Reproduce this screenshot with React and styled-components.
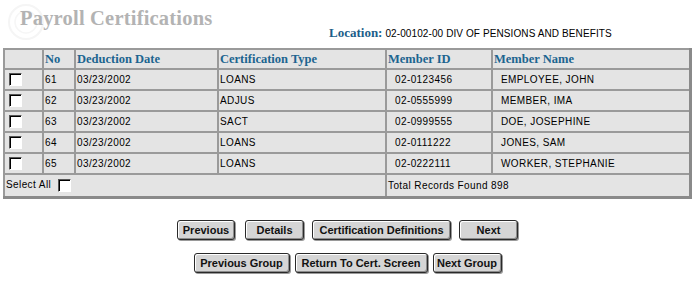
import React from "react";
import styled, { createGlobalStyle } from "styled-components";

const GlobalStyle = createGlobalStyle`
  body {
    margin: 0;
    background: #ffffff;
    font-family: "Liberation Sans", Arial, sans-serif;
  }
`;

const Page = styled.div`
  display: flex;
  flex-direction: column;
  width: 695px;
  height: 281px;
  overflow: hidden;
`;

const Header = styled.div`
  position: relative;
  height: 48px;
  display: flex;
  flex-direction: column;
`;

const Seal = styled.svg`
  position: absolute;
  left: 4px;
  top: 2px;
  z-index: 0;
`;

const Title = styled.h1`
  position: relative;
  z-index: 1;
  margin: 0;
  padding: 7px 0 0 20px;
  font-family: "Liberation Serif", "Times New Roman", serif;
  font-size: 20.5px;
  font-weight: bold;
  color: #b3b3b3;
  line-height: 22px;
  letter-spacing: 0.2px;
`;

const LocationRow = styled.div`
  margin: -4px 0 0 329px;
  display: flex;
  align-items: baseline;
  gap: 3px;
`;

const LocationLabel = styled.span`
  font-family: "Liberation Serif", "Times New Roman", serif;
  font-weight: bold;
  font-size: 13px;
  color: #1c5e8a;
`;

const LocationValue = styled.span`
  font-size: 10px;
  letter-spacing: 0.1px;
  color: #000;
`;

const TableWrap = styled.div`
  padding-left: 3px;
`;

const Table = styled.table`
  width: 689px;
  border-collapse: collapse;
  background: #e4e4e4;
  border-top: 2px solid #9a9a9a;
  border-left: 2px solid #9a9a9a;
  border-right: 3px solid #8a8a8a;
  border-bottom: 3px solid #8a8a8a;
  table-layout: fixed;
`;

const Th = styled.th`
  height: 18px;
  padding: 0 1px;
  border: 2px solid #9a9a9a;
  text-align: left;
  font-family: "Liberation Serif", "Times New Roman", serif;
  font-weight: bold;
  font-size: 12.5px;
  color: #1c6590;
  white-space: nowrap;
`;

const Td = styled.td`
  height: 19px;
  padding: 0 1px 0 ${({ $indent }) => ($indent ? "8px" : "1px")};
  border: 2px solid #9a9a9a;
  font-size: 10px;
  letter-spacing: 0.4px;
  color: #000;
  white-space: nowrap;
`;

const FooterTd = styled(Td)`
  height: 21px;
`;

const Box = styled.span`
  display: inline-block;
  width: 13px;
  height: 13px;
  box-sizing: border-box;
  background: #ffffff;
  border-top: 1px solid #555;
  border-left: 1px solid #555;
  border-right: 1px solid #fff;
  border-bottom: 1px solid #fff;
  box-shadow: inset 1px 1px 0 #000;
  vertical-align: middle;
  margin: ${({ $margin }) => $margin || "0 0 0 3px"};
`;

const ButtonRow = styled.div`
  display: flex;
  justify-content: center;
  gap: ${({ $gap }) => $gap}px;
  margin-top: ${({ $top }) => $top}px;
`;

const Button = styled.button`
  width: ${({ $w }) => $w}px;
  height: 20px;
  padding: 0;
  box-sizing: border-box;
  background: #d5d5d5;
  border: 1px solid #2a2a2a;
  border-radius: 3px;
  box-shadow: inset 1px 1px 0 #ffffff, inset -1px -1px 0 #8c8c8c, 1px 1px 0 #9a9a9a;
  font-family: "Liberation Sans", Arial, sans-serif;
  font-weight: bold;
  font-size: 11px;
  color: #111;
  cursor: pointer;
`;

const rows = [
  { no: 61, date: "03/23/2002", type: "LOANS", id: "02-0123456", name: "EMPLOYEE, JOHN" },
  { no: 62, date: "03/23/2002", type: "ADJUS", id: "02-0555999", name: "MEMBER, IMA" },
  { no: 63, date: "03/23/2002", type: "SACT", id: "02-0999555", name: "DOE, JOSEPHINE" },
  { no: 64, date: "03/23/2002", type: "LOANS", id: "02-0111222", name: "JONES, SAM" },
  { no: 65, date: "03/23/2002", type: "LOANS", id: "02-0222111", name: "WORKER, STEPHANIE" },
];

const App = () => (
  <Page>
    <GlobalStyle />
    <Header>
      <Seal width="44" height="40" viewBox="0 0 44 40">
        <circle cx="22" cy="20" r="17" fill="none" stroke="#f5f5f5" strokeWidth="2" />
        <circle cx="22" cy="20" r="11" fill="none" stroke="#f6f6f6" strokeWidth="1.5" />
      </Seal>
      <Title>Payroll Certifications</Title>
      <LocationRow>
        <LocationLabel>Location:</LocationLabel>
        <LocationValue>02-00102-00 DIV OF PENSIONS AND BENEFITS</LocationValue>
      </LocationRow>
    </Header>
    <TableWrap>
      <Table>
        <colgroup>
          <col style={{ width: 39 }} />
          <col style={{ width: 32 }} />
          <col style={{ width: 143 }} />
          <col style={{ width: 168 }} />
          <col style={{ width: 106 }} />
          <col />
        </colgroup>
        <thead>
          <tr>
            <Th />
            <Th>No</Th>
            <Th>Deduction Date</Th>
            <Th>Certification Type</Th>
            <Th>Member ID</Th>
            <Th>Member Name</Th>
          </tr>
        </thead>
        <tbody>
          {rows.map((r) => (
            <tr key={r.no}>
              <Td>
                <Box />
              </Td>
              <Td>{r.no}</Td>
              <Td>{r.date}</Td>
              <Td>{r.type}</Td>
              <Td $indent>{r.id}</Td>
              <Td $indent>{r.name}</Td>
            </tr>
          ))}
          <tr>
            <FooterTd colSpan={4}>
              Select All <Box $margin="0 0 0 4px" />
            </FooterTd>
            <FooterTd colSpan={2}>Total Records Found 898</FooterTd>
          </tr>
        </tbody>
      </Table>
    </TableWrap>
    <ButtonRow $gap={8} $top={21}>
      <Button $w={58}>Previous</Button>
      <Button $w={59} style={{ marginLeft: 2 }}>Details</Button>
      <Button $w={139}>Certification Definitions</Button>
      <Button $w={59}>Next</Button>
    </ButtonRow>
    <ButtonRow $gap={5} $top={13}>
      <Button $w={96}>Previous Group</Button>
      <Button $w={133}>Return To Cert. Screen</Button>
      <Button $w={69}>Next Group</Button>
    </ButtonRow>
  </Page>
);

export default App;
